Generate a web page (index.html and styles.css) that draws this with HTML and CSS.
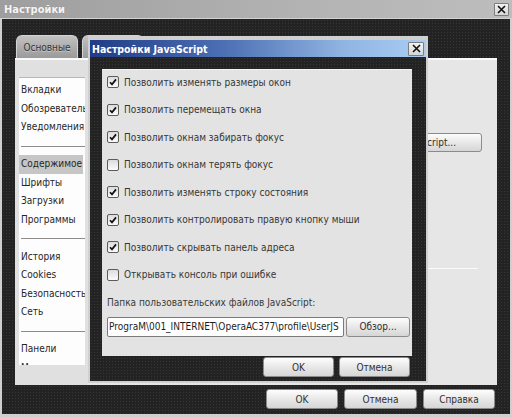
FILE: index.html
```html
<!DOCTYPE html>
<html lang="ru">
  <head>
    <meta charset="UTF-8" />
    <title>Настройки</title>
    <link rel="stylesheet" href="styles.css">
  </head>
  <body>
    <div class="screen">
      <div class="titlebar">
        <span class="title">Настройки</span>
        <span class="close">
          <svg width="9" height="9" viewBox="0 0 9 9"><path d="M1 1L8 8M8 1L1 8" stroke="#111" stroke-width="1.6"/></svg>
        </span>
      </div>

      <div class="frame">
        <div class="tabs">
          <div class="tab active">Основные</div>
          <div class="tab"></div>
        </div>

        <div class="page">
          <div class="sidebar">
            <ul class="nav">
              <li>Вкладки</li>
              <li>Обозреватель</li>
              <li>Уведомления</li>
              <li class="sep"></li>
              <li class="current">Содержимое</li>
              <li>Шрифты</li>
              <li>Загрузки</li>
              <li>Программы</li>
              <li class="sep"></li>
              <li>История</li>
              <li>Cookies</li>
              <li>Безопасность</li>
              <li>Сеть</li>
              <li class="sep"></li>
              <li>Панели</li>
              <li>Меню</li>
            </ul>
          </div>
          <div class="content">
            <div class="content-row">
              <button class="btn btn-js">Настройки JavaScript...</button>
            </div>
            <div class="rule"></div>
          </div>
        </div>

        <div class="actions">
          <button class="btn">OK</button>
          <button class="btn btn-cancel">Отмена</button>
          <button class="btn">Справка</button>
        </div>
      </div>

      <!-- modal over the settings window -->
      <div class="dialog">
        <div class="dialog-title">
          <span>Настройки JavaScript</span>
          <span class="close close-small">
            <svg width="9" height="9" viewBox="0 0 9 9"><path d="M1 1L8 8M8 1L1 8" stroke="#111" stroke-width="1.6"/></svg>
          </span>
        </div>
        <div class="dialog-body">
          <div class="options">
            <label class="option"><span class="check on"></span>Позволить изменять размеры окон</label>
            <label class="option"><span class="check on"></span>Позволить перемещать окна</label>
            <label class="option"><span class="check on"></span>Позволить окнам забирать фокус</label>
            <label class="option"><span class="check"></span>Позволить окнам терять фокус</label>
            <label class="option"><span class="check on"></span>Позволить изменять строку состояния</label>
            <label class="option"><span class="check on"></span>Позволить контролировать правую кнопку мыши</label>
            <label class="option"><span class="check on"></span>Позволить скрывать панель адреса</label>
            <label class="option"><span class="check"></span>Открывать консоль при ошибке</label>

            <div class="folder-label">Папка пользовательских файлов JavaScript:</div>
            <div class="folder-row">
              <div class="field">PrograM\001_INTERNET\OperaAC377\profile\UserJS</div>
              <button class="btn btn-browse">Обзор...</button>
            </div>
          </div>
          <div class="dialog-actions">
            <button class="btn">OK</button>
            <button class="btn">Отмена</button>
          </div>
        </div>
      </div>
    </div>
  </body>
</html>
```

FILE: styles.css
```css
* {
  margin: 0;
  padding: 0;
  box-sizing: border-box;
}
body {
  width: 512px;
  height: 417px;
  overflow: hidden;
  font-family: "DejaVu Sans Condensed", "Liberation Sans", Arial, sans-serif;
  font-size: 10px;
  color: #2e2e2e;
  background: #cfcfcf;
}
.screen {
  position: relative;
  width: 512px;
  height: 417px;
}

/* dark textured surfaces */
.frame,
.dialog-body {
  background-color: #232323;
  background-image: radial-gradient(#363636 0.8px, transparent 0.9px);
  background-size: 3px 3px;
}

.titlebar {
  height: 19px;
  display: flex;
  align-items: center;
  justify-content: space-between;
  padding: 0 3px 0 4px;
  background: linear-gradient(to right, #9e9e9e, #b3b3b3 60%, #bdbdbd);
  border-bottom: 1px solid #d2d2d2;
}
.title {
  color: #f4f4f4;
  font-weight: bold;
  font-size: 11px;
  text-shadow: 0 0 1px #8a8a8a;
}
.close {
  width: 15px;
  height: 13px;
  display: flex;
  align-items: center;
  justify-content: center;
  background: linear-gradient(#f2f2f2, #d6d6d6);
  border: 1px solid #7d7d7d;
  border-radius: 1px;
}

.frame {
  height: 395px;
  margin: 0 2px;
  padding: 16px 13px 0 13px;
  display: flex;
  flex-direction: column;
}

.tabs {
  display: flex;
  gap: 4px;
  height: 23px;
  padding-left: 1px;
}
.tab {
  width: 62px;
  display: flex;
  align-items: center;
  justify-content: center;
  color: #353535;
  text-shadow: 0 1px 0 #c8c8c8;
  background: linear-gradient(#c2c2c2, #9a9a9a);
  border: 1px solid #d4d4d4;
  border-bottom: 0;
  border-radius: 6px 6px 0 0;
}

.page {
  height: 327px;
  display: flex;
  background: #e6e6e6;
  border-top: 2px solid #fafafa;
}
.sidebar {
  width: 73px;
  padding: 17px 3px 20px 4px;
  background: #e0e0e0;
}
.nav {
  list-style: none;
  height: 100%;
  overflow: hidden;
  padding-top: 3px;
  background: #fdfdfd;
  border-top: 1px solid #b8b8b8;
}
.nav li {
  height: 18.5px;
  line-height: 18.5px;
  padding-left: 2px;
  white-space: nowrap;
  overflow: hidden;
  color: #262626;
}
.nav li.current {
  background: #c6c6c6;
  margin-right: 2px;
}
.nav li.sep {
  position: relative;
}
.nav li.sep::after {
  content: "";
  position: absolute;
  left: 2px;
  right: 0;
  top: 9px;
  border-top: 1px solid #8c8c8c;
}

.content {
  flex: 1;
  padding: 73px 15px 0 0;
}
.content-row {
  display: flex;
  justify-content: flex-end;
}
.rule {
  margin: 116px 4px 0 12px;
  border-top: 1px solid #fbfbfb;
}

.btn {
  height: 20px;
  font-family: inherit;
  font-size: 10px;
  color: #303030;
  background: linear-gradient(#fdfdfd, #e6e6e6 55%, #d6d6d6);
  border: 1px solid #8b8b8b;
  border-radius: 3px;
}
.btn-js {
  height: 19px;
  padding: 0 25px;
}

.actions {
  display: flex;
  justify-content: flex-end;
  gap: 6px;
  margin-top: 4px;
  padding-right: 2px;
}
.actions .btn {
  width: 72px;
}
.actions .btn-cancel {
  width: 73px;
}

/* JavaScript dialog */
.dialog {
  position: absolute;
  left: 88px;
  top: 36px;
  width: 340px;
  height: 347px;
  display: flex;
  flex-direction: column;
  border: 2px solid #d0d0d0;
  border-top-width: 4px;
}
.dialog-title {
  height: 17px;
  display: flex;
  align-items: center;
  justify-content: space-between;
  padding: 0 2px 0 2px;
  color: #fff;
  font-weight: bold;
  font-size: 10.5px;
  background: linear-gradient(to right, #203c86, #4d6fb4 40%, #8fb4e2 75%, #aacdf2);
}
.close-small {
  width: 16px;
  height: 14px;
}
.dialog-body {
  flex: 1;
  padding: 12px 14px 0 12px;
}
.options {
  height: 287px;
  padding: 6px 0 0 5px;
  background: #e3e3e3;
  border-top: 1px solid #f4f4f4;
}
.option {
  display: flex;
  align-items: center;
  height: 12px;
  margin-bottom: 15.57px;
  white-space: nowrap;
  color: #363636;
}
.check {
  width: 12px;
  height: 12px;
  margin-right: 5px;
  flex-shrink: 0;
  border: 1px solid #5c5c5c;
  border-radius: 2px;
  background: linear-gradient(#dcdcdc, #fbfbfb);
}
.check.on {
  background:
    url("data:image/svg+xml;utf8,<svg xmlns='http://www.w3.org/2000/svg' width='10' height='10' viewBox='0 0 10 10'><path d='M2 5.2L4 7.4L8 2.4' fill='none' stroke='%23111' stroke-width='1.7'/></svg>") center / 10px 10px no-repeat,
    linear-gradient(#dcdcdc, #fbfbfb);
}
.folder-label {
  margin-top: 16px;
  color: #3a3a3a;
}
.folder-row {
  display: flex;
  gap: 2px;
  margin-top: 9px;
}
.field {
  width: 237px;
  height: 20px;
  line-height: 18px;
  overflow: hidden;
  white-space: nowrap;
  padding-left: 1px;
  color: #1e1e1e;
  background: #fff;
  border: 1px solid #7a7a7a;
  border-radius: 2px;
}
.btn-browse {
  width: 64px;
}
.dialog-actions {
  display: flex;
  justify-content: flex-end;
  gap: 5px;
  margin-top: 1px;
  padding-right: 2px;
}
.dialog-actions .btn {
  width: 71px;
}
```
